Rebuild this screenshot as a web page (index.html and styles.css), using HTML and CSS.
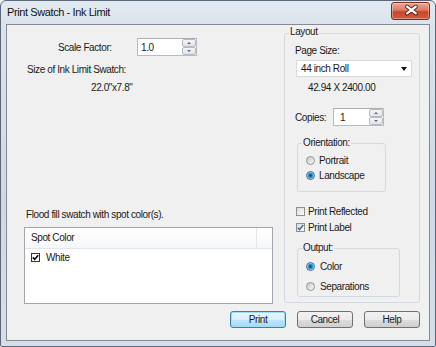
FILE: index.html
```html
<!DOCTYPE html>
<html>
<head>
<meta charset="utf-8">
<link rel="stylesheet" href="styles.css">
</head>
<body>
<div class="window">
  <div class="titlebar">
    <span class="title">Print Swatch - Ink Limit</span>
    <div class="close">
      <svg width="39" height="18" viewBox="0 0 39 18">
        <path d="M16.5 4.5 L25.5 11.5 M25.5 4.5 L16.5 11.5" stroke="#5a1e12" stroke-width="4" stroke-linecap="round" fill="none"/>
        <path d="M16.5 4.5 L25.5 11.5 M25.5 4.5 L16.5 11.5" stroke="#ffffff" stroke-width="2.2" stroke-linecap="round" fill="none"/>
      </svg>
    </div>
  </div>
  <div class="client">
    <div class="main">
      <div class="left">
        <div class="scale-row">
          <span class="scale-label">Scale Factor:</span>
          <div class="spin spin-scale">
            <span class="spin-text">1.0</span>
            <div class="spin-btns"><span class="spin-btn"><i class="arr up"></i></span><span class="spin-btn"><i class="arr down"></i></span></div>
          </div>
        </div>
        <div class="size-label">Size of Ink Limit Swatch:</div>
        <div class="size-value">22.0"x7.8"</div>
        <div class="flood">Flood fill swatch with spot color(s).</div>
        <div class="listview">
          <div class="lv-header"><span class="lv-col">Spot Color</span><span class="lv-rest"></span></div>
          <div class="lv-row">
            <span class="lv-check"><svg width="7" height="7" viewBox="0 0 7 7"><path d="M0.8 3.4 L2.7 5.4 L6.2 1.2" stroke="#000" stroke-width="1.6" fill="none"/></svg></span>
            <span>White</span>
          </div>
        </div>
      </div>
      <div class="group layout">
        <div class="group-title">Layout</div>
        <div class="page-label">Page Size:</div>
        <div class="select"><span>44 inch Roll</span><i class="caret"></i></div>
        <div class="dims">42.94 X 2400.00</div>
        <div class="copies-row">
          <span class="copies-label">Copies:</span>
          <div class="spin spin-copies">
            <span class="spin-text">1</span>
            <div class="spin-btns"><span class="spin-btn"><i class="arr up"></i></span><span class="spin-btn"><i class="arr down"></i></span></div>
          </div>
        </div>
        <div class="group orient">
          <div class="group-title">Orientation:</div>
          <div class="radio-row first"><span class="radio"></span><span>Portrait</span></div>
          <div class="radio-row"><span class="radio on"></span><span>Landscape</span></div>
        </div>
        <div class="check-row first"><span class="cbox"></span><span>Print Reflected</span></div>
        <div class="check-row"><span class="cbox"><svg width="7" height="7" viewBox="0 0 7 7"><path d="M0.8 3.6 L2.6 5.6 L6.2 0.8" stroke="#3b5b96" stroke-width="1.4" fill="none"/></svg></span><span>Print Label</span></div>
        <div class="group output">
          <div class="group-title">Output:</div>
          <div class="radio-row2 first"><span class="radio on"></span><span>Color</span></div>
          <div class="radio-row2"><span class="radio"></span><span>Separations</span></div>
        </div>
      </div>
    </div>
    <div class="buttons">
      <div class="btn default">Print</div>
      <div class="btn">Cancel</div>
      <div class="btn">Help</div>
    </div>
  </div>
</div>
</body>
</html>
```
FILE: styles.css
```css
* { box-sizing: border-box; }
html, body { margin: 0; padding: 0; background: #ffffff; }
body {
  font-family: "Liberation Sans", Arial, sans-serif;
  font-size: 10px;
  letter-spacing: -0.4px;
  color: #1a1a1a;
}
.window {
  width: 436px;
  height: 347px;
  border: 1px solid #5b6878;
  border-radius: 6px 6px 2px 2px;
  background: linear-gradient(to bottom, #e4eaf1 0px, #dbe3ec 24px, #cfd9e5 200px, #d6dee9 347px);
  display: flex;
  flex-direction: column;
}
.titlebar {
  height: 23px;
  display: flex;
  justify-content: space-between;
  padding: 0 5px 0 6px;
}
.title {
  font-size: 11px;
  letter-spacing: -0.4px;
  line-height: 23px;
  color: #111;
}
.close {
  width: 39px;
  height: 18px;
  margin-top: 1px;
  border: 1px solid #7a2c1e;
  border-radius: 3px;
  background: linear-gradient(to bottom, #eaa898 0%, #dc7a62 45%, #c7442b 55%, #d35a3c 100%);
  box-shadow: inset 0 0 0 1px rgba(255,255,255,0.35);
  display: flex;
}
.close svg { margin: -1px 0 0 -1px; }
.client {
  height: 317px;
  margin: 0 5px 0 5px;
  border: 1px solid #868b93;
  background: #f0f0f0;
  display: flex;
  flex-direction: column;
}
.main { display: flex; height: 279px; }
.left { width: 277px; display: flex; flex-direction: column; }

.scale-row { margin-top: 13px; height: 18px; display: flex; align-items: center; padding-left: 51px; }
.scale-label { width: 79px; }
.spin {
  height: 18px;
  background: #fff;
  border: 1px solid #b6bcc6;
  border-top-color: #abadb3;
  display: flex;
  justify-content: space-between;
  align-items: center;
}
.spin-scale { width: 60px; }
.spin-copies { width: 51px; }
.spin-text { padding-left: 3px; }
.spin-copies .spin-text { padding-left: 6px; }
.spin-btns { width: 14px; height: 16px; display: flex; flex-direction: column; }
.spin-btn {
  flex: 1;
  border: 1px solid #b8bcc2;
  border-radius: 2px;
  background: linear-gradient(to bottom, #f6f6f6, #e2e3e6);
  display: flex;
  align-items: center;
  justify-content: center;
}
.arr { width: 0; height: 0; border-left: 2px solid transparent; border-right: 2px solid transparent; }
.arr.up { border-bottom: 2px solid #4f6a93; }
.arr.down { border-top: 2px solid #4f6a93; }

.size-label { margin-top: 7px; line-height: 14px; padding-left: 20px; }
.size-value { margin-top: 4px; line-height: 14px; padding-left: 84px; }
.flood { margin-top: 113px; line-height: 14px; padding-left: 19px; }
.listview {
  margin-top: 5px;
  margin-left: 17px;
  width: 249px;
  height: 77px;
  border: 1px solid #a3a6ac;
  background: #fff;
}
.lv-header {
  height: 21px;
  display: flex;
  border-bottom: 1px solid #e3e6ea;
  background: linear-gradient(to bottom, #ffffff, #f6f7f9);
}
.lv-col { width: 232px; border-right: 1px solid #e3e6ea; padding-left: 6px; line-height: 20px; }
.lv-rest { flex: 1; }
.lv-row { height: 17px; display: flex; align-items: center; padding-left: 6px; gap: 6px; }
.lv-check {
  width: 9px; height: 9px; border: 1px solid #333; background: #fff;
  display: flex; align-items: center; justify-content: center;
}

.group { border: 1px solid #d3d9de; border-radius: 3px; }
.group-title {
  width: fit-content;
  line-height: 12px;
  padding: 0 1px;
  background: #f0f0f0;
}
.layout { margin-top: 8px; width: 136px; height: 270px; }
.layout > .group-title { margin: -8px 0 0 4px; }
.page-label { margin-top: 6px; line-height: 14px; padding-left: 10px; }
.select {
  margin: 2px 0 0 11px;
  width: 116px;
  height: 17px;
  background: #fff;
  border: 1px solid #dadada;
  display: flex;
  align-items: center;
  justify-content: space-between;
  padding: 0 4px 0 4px;
}
.caret { width: 0; height: 0; border-left: 3.5px solid transparent; border-right: 3.5px solid transparent; border-top: 4px solid #111; }
.dims { margin-top: 4px; line-height: 14px; padding-left: 23px; }
.copies-row { margin-top: 13px; height: 18px; display: flex; align-items: center; padding-left: 10px; }
.copies-label { width: 38px; }

.orient { margin: 17px 0 0 12px; width: 89px; height: 49px; }
.orient > .group-title, .output > .group-title { margin: -7px 0 0 4px; }
.radio-row { height: 15px; display: flex; align-items: center; padding-left: 8px; gap: 4px; }
.radio-row.first { margin-top: 4px; }
.radio {
  width: 9px; height: 9px; border-radius: 50%;
  border: 1px solid #909498;
  background: linear-gradient(135deg, #c4c4c4 0%, #e2e2e2 50%, #f8f8f8 100%);
}
.radio.on {
  border-color: #3a6e93;
  background: radial-gradient(circle, #083b60 0, #1e6ea6 1.3px, #3aa0dc 2.5px, #8fd0ef 3.2px, #e6e6e6 3.6px);
}
.check-row { height: 16px; display: flex; align-items: center; padding-left: 11px; gap: 3px; }
.check-row.first { margin-top: 11px; }
.cbox {
  width: 9px; height: 9px; border: 1px solid #8f8f8f;
  background: linear-gradient(135deg, #dcdcdc, #fbfbfb);
  display: flex; align-items: center; justify-content: center;
}
.output { margin: 13px 0 0 12px; width: 103px; height: 49px; }
.radio-row2 { height: 16px; display: flex; align-items: center; padding-left: 8px; gap: 5px; }
.radio-row2.first { margin-top: 4px; }
.radio-row2 + .radio-row2 { margin-top: 4px; }

.buttons { margin-top: 7px; display: flex; justify-content: flex-end; gap: 11px; padding-right: 9px; }
.btn {
  width: 56px; height: 17px;
  border: 1px solid #707070;
  border-radius: 3px;
  background: linear-gradient(to bottom, #f2f2f2 0%, #ebebeb 50%, #dddddd 51%, #cfcfcf 100%);
  display: flex; align-items: center; justify-content: center;
}
.btn.default {
  border-color: #3c7fb1;
  background: linear-gradient(to bottom, #eaf6fd 0%, #d9f0fc 50%, #bee6fd 51%, #a7d9f5 100%);
  box-shadow: inset 0 0 0 1px #9fdcf5;
}
```
